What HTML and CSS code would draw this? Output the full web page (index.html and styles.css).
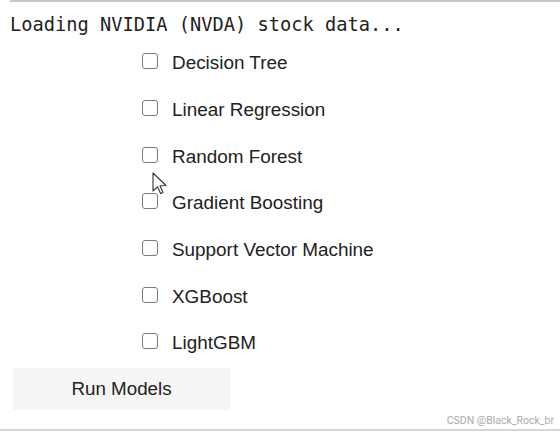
FILE: index.html
```html
<!DOCTYPE html>
<html>
<head>
<meta charset="utf-8">
<link rel="stylesheet" href="styles.css">
</head>
<body>
<div class="page">
  <div class="topline"></div>
  <div class="loading">Loading NVIDIA (NVDA) stock data...</div>
  <div class="models">
    <label class="row"><span class="box"></span><span class="lbl">Decision Tree</span></label>
    <label class="row"><span class="box"></span><span class="lbl">Linear Regression</span></label>
    <label class="row"><span class="box"></span><span class="lbl">Random Forest</span></label>
    <label class="row"><span class="box"></span><span class="lbl">Gradient Boosting</span></label>
    <label class="row"><span class="box"></span><span class="lbl">Support Vector Machine</span></label>
    <label class="row"><span class="box"></span><span class="lbl">XGBoost</span></label>
    <label class="row"><span class="box"></span><span class="lbl">LightGBM</span></label>
  </div>
  <div class="btn">Run Models</div>
  <div class="footer"><span class="wm">CSDN @Black_Rock_br</span></div>
  <svg class="cursor" width="16" height="24" viewBox="0 0 16 24"><path d="M1 1 L1 19 L5.5 14.8 L8.6 21.6 L11 20.5 L8 13.8 L14 13.5 Z" fill="#fff" stroke="#333" stroke-width="1.1" stroke-linejoin="round"/></svg>
</div>
</body>
</html>
```
FILE: styles.css
```css
html, body { margin: 0; padding: 0; background: #fff; }
.page { position: relative; width: 560px; height: 434px; overflow: hidden; }
.topline { margin-left: 10px; height: 2px; background: #c9c9c9; }
.loading {
  font-family: "DejaVu Sans Mono", "Liberation Mono", monospace;
  font-size: 18.7px;
  color: #222;
  padding-left: 10px;
  margin-top: 12px;
  line-height: 22px;
  white-space: pre;
}
.models {
  display: flex;
  flex-direction: column;
  margin-left: 142px;
  margin-top: 4px;
}
.row {
  display: flex;
  align-items: center;
  height: 46.7px;
  font-family: "Liberation Sans", Arial, sans-serif;
  font-size: 18.9px;
  color: #222;
}
.box {
  width: 14px; height: 14px;
  border: 1.6px solid #7a7a7a;
  border-radius: 3px;
  margin-top: -4px;
  box-sizing: content-box;
}
.lbl { margin-left: 14px; }
.btn {
  margin-left: 13px;
  margin-top: 1px;
  width: 217px;
  height: 42px;
  background: #f5f5f5;
  display: flex;
  align-items: center;
  justify-content: center;
  font-family: "Liberation Sans", Arial, sans-serif;
  font-size: 18.8px;
  color: #222;
}
.footer {
  margin-top: 3px;
  height: 16px;
  border-bottom: 2px solid #d6d6d6;
  display: flex;
  justify-content: flex-end;
  align-items: center;
  padding-right: 6px;
}
.wm {
  font-family: "Roboto", "Liberation Sans", sans-serif;
  font-size: 10.5px;
  color: #aaa;
}
.cursor { position: absolute; left: 152px; top: 172px; }
```
